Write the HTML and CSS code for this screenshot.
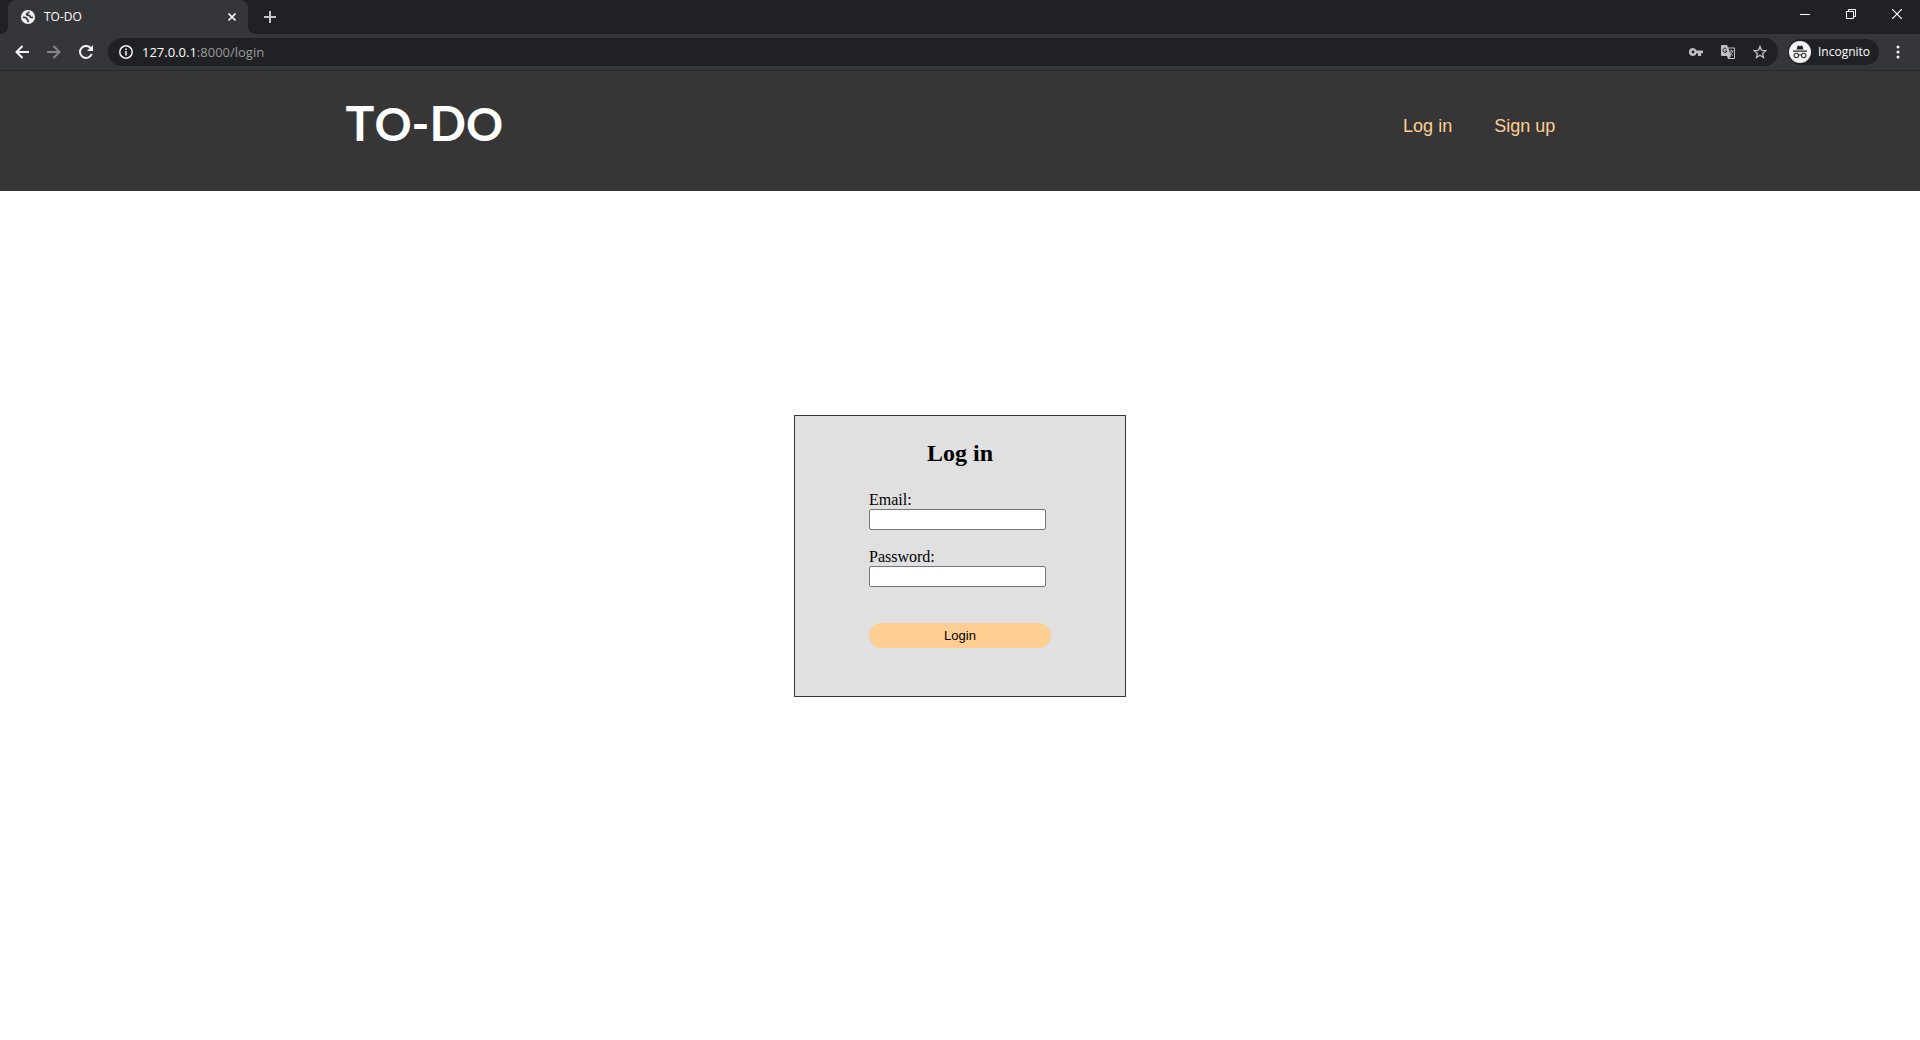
FILE: index.html
```html
<!DOCTYPE html>
<html lang="en">
<head>
<meta charset="utf-8">
<meta name="viewport" content="width=device-width, initial-scale=1">
<title>TO-DO</title>
<link rel="stylesheet" href="styles.css">
</head>
<body>
<div class="browser">
  <div class="tab-strip">
    <div class="tab">
      <svg class="favicon" viewBox="0 0 14 14" width="14" height="14" aria-hidden="true"><circle cx="7" cy="7" r="7" fill="#f1f3f4"/><path d="M8 1.500c0 1.700-1.200 1.500-2 2-1 .6-.2 1.700.6 1.700 1.400 0 2.400.2 2.600 1.400.1 1 1.200 1 2.800.8M1.800 7.400c1.600 0 3-.2 3.700.6.6.7.1 1.300 1 1.700.7.4.8 1.200.5 2.500" fill="none" stroke="#35363a" stroke-width="1.700"/></svg>
      <span class="tab-title">TO-DO</span>
      <button class="tab-close" type="button" aria-label="Close tab"><svg viewBox="0 0 8 8" width="8" height="8"><path d="M.5.5l7 7M7.500.500l-7 7" stroke="#f1f3f4" stroke-width="1.600"/></svg></button>
    </div>
    <button class="new-tab" type="button" aria-label="New tab"><svg viewBox="0 0 12 12" width="12" height="12"><path d="M6 0v12M0 6h12" stroke="#c4c7ca" stroke-width="2"/></svg></button>
    <div class="window-controls">
      <button type="button" aria-label="Minimize"><svg viewBox="0 0 10 10" width="10" height="10"><path d="M0 5.500h10" stroke="#fff"/></svg></button>
      <button type="button" aria-label="Restore"><svg viewBox="0 0 10 10" width="10" height="10"><path d="M.5 2.500h7v7h-7zM2.500 2.500v-2h7v7h-2" fill="none" stroke="#fff"/></svg></button>
      <button type="button" aria-label="Close"><svg viewBox="0 0 10 10" width="10" height="10"><path d="M0 0l10 10M10 0L0 10" stroke="#fff" stroke-width="1.200"/></svg></button>
    </div>
  </div>
  <div class="toolbar">
    <div class="tools">
      <button type="button" aria-label="Back"><svg viewBox="0 0 14 14" width="14" height="14"><path d="M14 7H1.500M7.500 1L1.500 7l6 6" fill="none" stroke="#f1f3f4" stroke-width="2"/></svg></button>
      <button type="button" aria-label="Forward"><svg viewBox="0 0 14 14" width="14" height="14"><path d="M0 7h12.500M6.500 1l6 6-6 6" fill="none" stroke="#86878a" stroke-width="2"/></svg></button>
      <button type="button" aria-label="Reload"><svg viewBox="0 0 14 14" width="14" height="14"><path d="M11.600 3A6 6 0 1 0 12.700 9" fill="none" stroke="#f1f3f4" stroke-width="2"/><path d="M14 0v6H8z" fill="#f1f3f4"/></svg></button>
    </div>
    <div class="omnibox">
      <svg viewBox="0 0 14 14" width="14" height="14" aria-hidden="true"><circle cx="7" cy="7" r="6.200" fill="none" stroke="#f1f3f4" stroke-width="1.500"/><path d="M7 6v4.500M7 3.500V5" stroke="#f1f3f4" stroke-width="1.600"/></svg>
      <span class="url"><span class="host">127.0.0.1</span>:8000/login</span>
      <div class="page-actions">
        <button type="button" aria-label="Passwords"><svg viewBox="0 0 14 14" width="14" height="14"><path fill="#bdc1c6" fill-rule="evenodd" d="M4 3a4 4 0 1 0 3.700 5.300H9V11h3V8.300h2V5.500H7.600A4 4 0 0 0 4 3zm0 2.600a1.400 1.400 0 1 1 0 2.800 1.400 1.400 0 0 1 0-2.800z"/></svg></button>
        <button type="button" aria-label="Translate"><svg viewBox="0 0 14 14" width="14" height="14"><path d="M1 0h5l1 2.500h6.200a.8.8 0 0 1 .8.8V13.200a.8.800 0 0 1-.8.800H7L6 11H1a1 1 0 0 1-1-1V1a1 1 0 0 1 1-1z" fill="#bdc1c6"/><path d="M7.500 3.500H13V13H8.500L10 11z" fill="#202124"/><path d="M5.500 3.800A2.100 2.100 0 1 0 6 6H4" fill="none" stroke="#202124"/><path d="M8.500 6H12.500M10.500 5v1M11.700 6c-.5 2-1.500 3-2.500 3.800M9 7c.7 1.500 1.500 2.500 3 3.500" fill="none" stroke="#bdc1c6" stroke-width=".9"/></svg></button>
        <button type="button" aria-label="Bookmark"><svg viewBox="0 0 14 14" width="14" height="14"><path d="M7 1.500l1.600 3.800 4.200.4-3.200 2.700 1 4.100L7 10.300l-3.600 2.200 1-4.100L1.200 5.700l4.200-.4z" fill="none" stroke="#bdc1c6" stroke-width="1.300"/></svg></button>
      </div>
    </div>
    <button class="profile" type="button">
      <svg viewBox="0 0 22 22" width="22" height="22" aria-hidden="true"><circle cx="11" cy="11" r="11" fill="#f1f3f4"/><path d="M7.500 8.500L8.700 4.500l2.300.6 2.300-.6 1.200 4zM4 9.500h14v1.300H4z" fill="#202124"/><g fill="none" stroke="#303134" stroke-width="1.100"><circle cx="7.300" cy="14.500" r="2.200"/><circle cx="14.700" cy="14.500" r="2.200"/><path d="M9.500 14.200q1.500-.8 3 0"/></g></svg>
      <span>Incognito</span>
    </button>
    <button class="menu" type="button" aria-label="Menu"><svg viewBox="0 0 4 14" width="4" height="14"><g fill="#f1f3f4"><circle cx="2" cy="2" r="1.500"/><circle cx="2" cy="7" r="1.500"/><circle cx="2" cy="12" r="1.500"/></g></svg></button>
  </div>
</div>

<header class="site-header">
  <span class="logo">T<span class="round">O</span>-D<span class="round">O</span></span>
  <nav class="site-nav">
    <a href="#login">Log in</a>
    <a href="#signup">Sign up</a>
  </nav>
</header>

<main class="content">
  <form class="card" id="login">
    <h2>Log in</h2>
    <div class="field">
      <label for="email">Email:</label>
      <input id="email" type="email">
    </div>
    <div class="field">
      <label for="password">Password:</label>
      <input id="password" type="password">
    </div>
    <button class="submit" type="submit">Login</button>
  </form>
</main>
</body>
</html>
```
FILE: styles.css
```css
* { box-sizing: border-box; }

body {
  margin: 0;
  min-height: 100vh;
  display: flex;
  flex-direction: column;
  background: #fff;
  color: #000;
  font: 16px/18px "Liberation Serif", serif;
}

button {
  padding: 0;
  border: 0;
  background: none;
  color: inherit;
  font: inherit;
}

svg { display: block; flex: none; }

/* Browser window */
.browser {
  color: #fff;
  font: 12px/18px "Open Sans", sans-serif;
}

.tab-strip {
  display: flex;
  height: 34px;
  padding-left: 8px;
  background: #202124;
}

.tab {
  position: relative;
  display: flex;
  align-items: center;
  width: 240px;
  padding: 0 12px 0 13px;
  border-radius: 8px 8px 0 0;
  background: #35363a;
}

/* Flared feet on both sides of the active tab */
.tab::before,
.tab::after {
  content: "";
  position: absolute;
  bottom: 0;
  width: 8px;
  height: 8px;
}

.tab::before {
  right: 100%;
  background: radial-gradient(circle at 0 0, #202124 8px, #35363a 8px);
}

.tab::after {
  left: 100%;
  background: radial-gradient(circle at 100% 0, #202124 8px, #35363a 8px);
}

.tab-title { flex: 1; margin-left: 9px; }

.new-tab,
.window-controls button,
.tools button,
.page-actions button,
.menu,
.tab-close {
  display: flex;
  align-items: center;
  justify-content: center;
}

.new-tab { width: 28px; margin-left: 8px; }

.window-controls { display: flex; height: 28px; margin-left: auto; }
.window-controls button { width: 46px; }

.toolbar {
  display: flex;
  align-items: center;
  height: 37px;
  padding: 0 8px;
  border-bottom: 1px solid #29292b;
  background: #35363a;
}

.tools { display: flex; gap: 4px; }
.tools button { width: 28px; height: 28px; }

.omnibox {
  display: flex;
  flex: 1;
  align-items: center;
  height: 28px;
  margin: 0 10px 0 8px;
  padding: 0 4px 0 11px;
  border-radius: 14px;
  background: #202124;
}

.url {
  margin-left: 9px;
  color: #9a9b9d;
  font-size: 13px;
}

.host { color: #fff; }

.page-actions { display: flex; gap: 4px; margin-left: auto; }
.page-actions button { width: 28px; height: 28px; }

.profile {
  display: flex;
  align-items: center;
  gap: 7px;
  width: 91px;
  height: 26px;
  padding-left: 1px;
  border-radius: 13px;
  background: #202124;
}

.menu { width: 28px; height: 28px; margin-left: 5px; }

/* Site */
.site-header {
  display: flex;
  justify-content: space-between;
  height: 120px;
  padding: 28px 19% 0 18%;
  background: #363636;
}

.logo {
  color: #fff;
  font: bold 48px/48px Lato, sans-serif;
}

.logo .round { font-size: 46px; }

.site-nav {
  display: flex;
  gap: 42px;
  font: 18px/54px "Liberation Sans", Arial, sans-serif;
}

.site-nav a { color: #ffce93; text-decoration: none; }

.content {
  display: flex;
  justify-content: center;
  padding: 224px 16px;
}

.card {
  width: 332px;
  padding: 24px 74px 48px;
  border: 1px solid #363636;
  background: #e0e0e0;
}

.card h2 {
  margin: 0 0 24px;
  font-size: 24px;
  line-height: 27px;
  text-align: center;
}

.field { margin-bottom: 18px; }
.field label { display: block; }

.field input {
  display: block;
  width: 177px;
  height: 21px;
  padding: 1px 2px;
  border: 1px solid #767676;
  border-radius: 2px;
  background: #fff;
}

.submit {
  display: block;
  width: 100%;
  height: 25px;
  margin-top: 36px;
  border-radius: 13px;
  background: #ffce93;
  font: 13px/15px "Liberation Sans", Arial, sans-serif;
}
```
